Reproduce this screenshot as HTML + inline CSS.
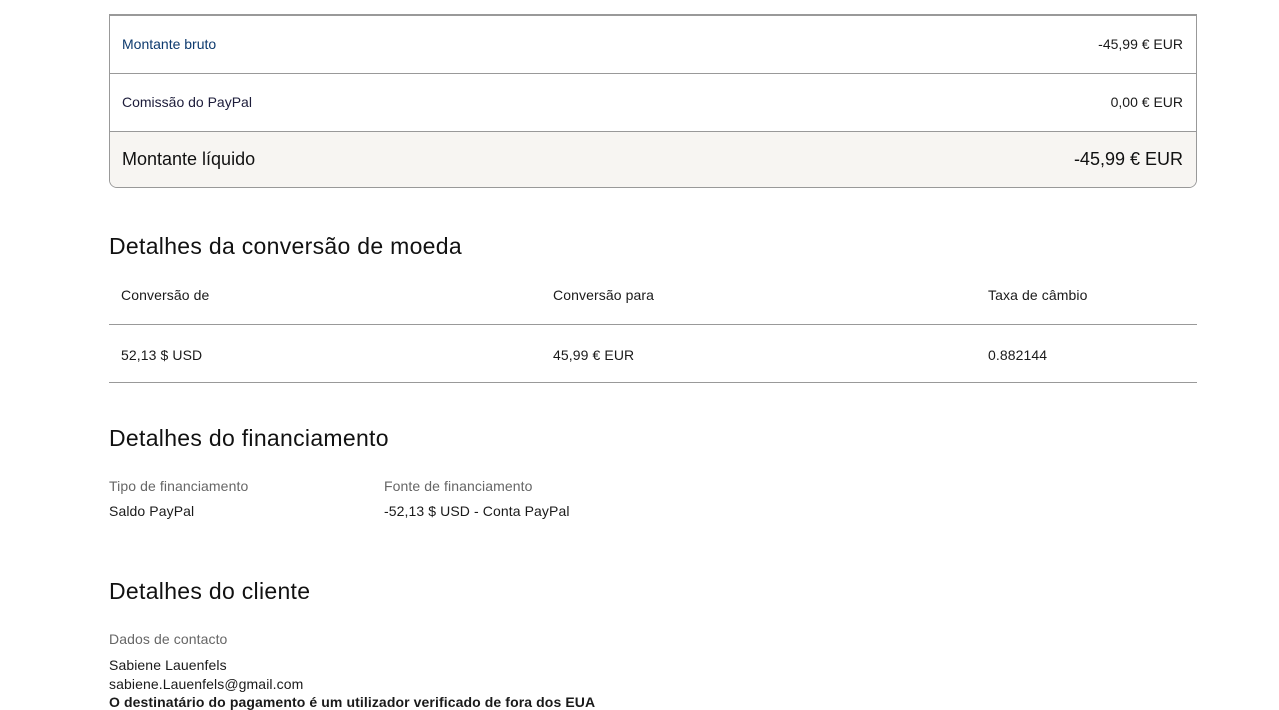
<!DOCTYPE html>
<html><head><meta charset="utf-8"><style>
html,body{margin:0;padding:0;background:#fff;width:1279px;height:700px;overflow:hidden;font-family:"Liberation Sans",Arial,sans-serif;color:#1a1a1a}
.a{position:absolute;white-space:nowrap}
.box{position:absolute;left:109px;top:14px;width:1086px;height:171px;border:1px solid #999;border-top:2px solid #999;border-radius:0 0 8px 8px;overflow:hidden}
.row{position:absolute;left:0;right:0}
.h{font-size:23px;color:#111;letter-spacing:0.3px}
.s{font-size:14px;color:#1a1a1a;letter-spacing:0.1px}
.g{font-size:14px;color:#666;letter-spacing:0.1px}
</style></head><body>
<div class="box">
 <div class="row" style="top:0;height:57px;border-bottom:1px solid #999"></div>
 <div class="row" style="top:58px;height:57px;border-bottom:1px solid #999"></div>
 <div class="row" style="top:116px;bottom:0;background:#f7f5f2"></div>
 <div class="a" style="left:12px;top:20px;font-size:14px;color:#0d3a6e">Montante bruto</div>
 <div class="a" style="right:13px;top:20px;font-size:14px">-45,99 € EUR</div>
 <div class="a" style="left:12px;top:78px;font-size:14px;color:#1c1c3a">Comissão do PayPal</div>
 <div class="a" style="right:13px;top:78px;font-size:14px">0,00 € EUR</div>
 <div class="a" style="left:12px;top:133px;font-size:18px;color:#111">Montante líquido</div>
 <div class="a" style="right:13px;top:133px;font-size:18px;color:#111">-45,99 € EUR</div>
</div>
<div class="a h" style="left:109px;top:233px">Detalhes da conversão de moeda</div>
<div class="a s" style="left:121px;top:287px">Conversão de</div>
<div class="a s" style="left:553px;top:287px">Conversão para</div>
<div class="a s" style="left:988px;top:287px">Taxa de câmbio</div>
<div class="a" style="left:109px;top:324px;width:1088px;border-top:1px solid #999"></div>
<div class="a s" style="left:121px;top:347px">52,13 $ USD</div>
<div class="a s" style="left:553px;top:347px">45,99 € EUR</div>
<div class="a s" style="left:988px;top:347px">0.882144</div>
<div class="a" style="left:109px;top:382px;width:1088px;border-top:1px solid #999"></div>
<div class="a h" style="left:109px;top:425px">Detalhes do financiamento</div>
<div class="a g" style="left:109px;top:478px">Tipo de financiamento</div>
<div class="a g" style="left:384px;top:478px">Fonte de financiamento</div>
<div class="a s" style="left:109px;top:503px">Saldo PayPal</div>
<div class="a s" style="left:384px;top:503px">-52,13 $ USD - Conta PayPal</div>
<div class="a h" style="left:109px;top:578px">Detalhes do cliente</div>
<div class="a g" style="left:109px;top:631px">Dados de contacto</div>
<div class="a s" style="left:109px;top:657px">Sabiene Lauenfels</div>
<div class="a s" style="left:109px;top:676px">sabiene.Lauenfels@gmail.com</div>
<div class="a s" style="left:109px;top:694px;font-weight:bold">O destinatário do pagamento é um utilizador verificado de fora dos EUA</div>
</body></html>
